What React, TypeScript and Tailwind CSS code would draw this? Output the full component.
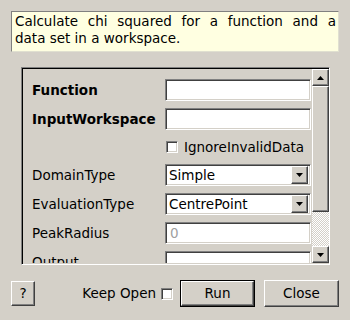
import React from "react";

const sunken =
  "border border-t-[#808080] border-l-[#808080] border-b-white border-r-white shadow-[inset_1px_1px_0_#404040,inset_-1px_-1px_0_#d4d0c8]";
const raised =
  "border border-t-white border-l-white border-b-[#404040] border-r-[#404040] shadow-[inset_-1px_-1px_0_#808080,inset_1px_1px_0_#d4d0c8]";

function TextInput({ value, disabled }: { value?: string; disabled?: boolean }) {
  return (
    <div
      className={`${sunken} w-[146px] h-[22px] flex items-center px-[4px] ${
        disabled ? "bg-white text-[#a0a0a0]" : "bg-white"
      }`}
    >
      {value}
    </div>
  );
}

function Combo({ value }: { value: string }) {
  return (
    <div className={`${sunken} w-[146px] h-[22px] flex items-center bg-white pl-[3px] pr-[2px]`}>
      <span className="flex-1">{value}</span>
      <div className={`${raised} bg-[#d4d0c8] w-[17px] h-[18px] flex items-center justify-center`}>
        <svg width="7" height="4" viewBox="0 0 7 4">
          <path d="M0 0h7L3.5 4z" fill="#000" />
        </svg>
      </div>
    </div>
  );
}

function Row({ label, bold, children }: { label: string; bold?: boolean; children: React.ReactNode }) {
  return (
    <div className="flex items-center h-[22px]">
      <div className={`w-[142px] pl-[9px] whitespace-nowrap ${bold ? "font-bold" : ""}`}>{label}</div>
      {children}
    </div>
  );
}

export default function App() {
  return (
    <div
      className="w-[350px] h-[320px] bg-[#d4d0c8] text-black text-[13.5px] overflow-hidden pt-[11px] px-[11px]"
      style={{ fontFamily: "'DejaVu Sans', sans-serif" }}
    >
      <div className="h-[41px] bg-[#ffffe1] border border-t-[#808080] border-l-[#808080] border-b-[#e0e0d0] border-r-[#e0e0d0] pl-[3px] pr-[2px] pt-[1px] leading-[17px]">
        <div className="text-justify [text-align-last:justify]">Calculate chi squared for a function and a</div>
        <div>data set in a workspace.</div>
      </div>

      <div className="mt-[15px] ml-[10px] mr-[9px] h-[198px] flex border border-t-[#808080] border-l-[#808080] border-b-white border-r-white shadow-[inset_1px_1px_0_#000,inset_-1px_-1px_0_#d4d0c8] pl-[1px] py-[1px]">
        <div className="flex-1 overflow-hidden pt-[10px] flex flex-col gap-[7px]">
          <Row label="Function" bold>
            <TextInput />
          </Row>
          <Row label="InputWorkspace" bold>
            <TextInput />
          </Row>
          <div className="flex items-center h-[20px] pl-[143px] gap-[6px]">
            <div className={`${sunken} bg-white w-[12px] h-[12px]`} />
            <span>IgnoreInvalidData</span>
          </div>
          <Row label="DomainType">
            <Combo value="Simple" />
          </Row>
          <Row label="EvaluationType">
            <Combo value="CentrePoint" />
          </Row>
          <Row label="PeakRadius">
            <TextInput value="0" disabled />
          </Row>
          <Row label="Output">
            <TextInput />
          </Row>
        </div>
        <div className="w-[17px] flex flex-col">
          <div className={`${raised} bg-[#d4d0c8] h-[17px] flex items-center justify-center`}>
            <svg width="7" height="4" viewBox="0 0 7 4">
              <path d="M0 4h7L3.5 0z" fill="#000" />
            </svg>
          </div>
          <div className={`${raised} bg-[#d4d0c8] h-[126px]`} />
          <div className="flex-1 bg-[repeating-conic-gradient(#d4d0c8_0_25%,#ffffff_0_50%)] bg-[length:2px_2px]" />
          <div className={`${raised} bg-[#d4d0c8] h-[17px] flex items-center justify-center`}>
            <svg width="7" height="4" viewBox="0 0 7 4">
              <path d="M0 0h7L3.5 4z" fill="#000" />
            </svg>
          </div>
        </div>
      </div>

      <div className="mt-[15px] flex items-center h-[27px]">
        <div className={`${raised} bg-[#d4d0c8] w-[24px] h-[25px] flex items-center justify-center`}>?</div>
        <div className="flex-1" />
        <span>Keep Open</span>
        <div className={`${sunken} bg-white w-[12px] h-[12px] ml-[5px]`} />
        <div className="ml-[7px] w-[75px] h-[27px] border border-black">
          <div className={`${raised} bg-[#d4d0c8] w-full h-full flex items-center justify-center`}>Run</div>
        </div>
        <div className={`${raised} ml-[9px] bg-[#d4d0c8] w-[75px] h-[27px] flex items-center justify-center`}>
          Close
        </div>
      </div>
    </div>
  );
}
